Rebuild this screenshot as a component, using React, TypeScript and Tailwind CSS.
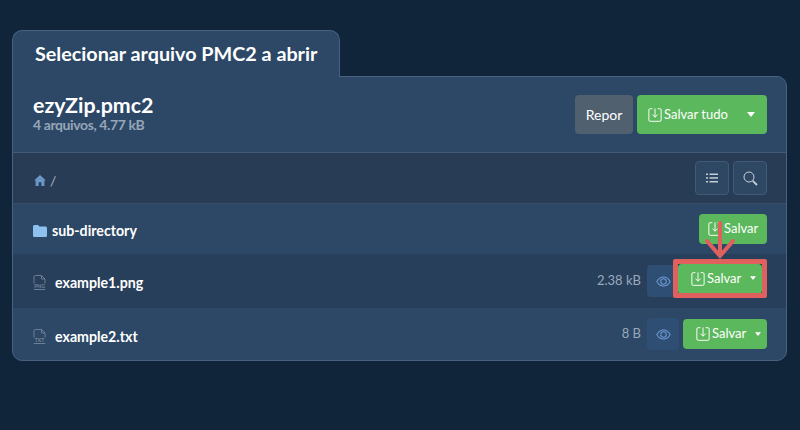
const SaveIcon = () => (
    <svg width="14" height="14" viewBox="0 0 16 16" fill="none" stroke="currentColor" strokeWidth="1.1" className="shrink-0">
        <path d="M5 .8H2.500A1.500 1.500 0 0 0 1 2.300v11.400a1.500 1.500 0 0 0 1.500 1.500h11a1.500 1.500 0 0 0 1.500-1.500V2.300A1.500 1.500 0 0 0 13.500.8H11" />
        <path d="M8 .5v10M5 7.500 8 10.500 11 7.500" />
    </svg>
)

const Caret = ({ big }: { big?: boolean }) => (
    <svg width={big ? 8 : 6} height={big ? 5 : 4} viewBox="0 0 8 5" className="shrink-0">
        <path d="M0 0h8L4 5z" fill="currentColor" />
    </svg>
)

const EyeIcon = () => (
    <svg width="15" height="11" viewBox="0 0 16 12" fill="none" stroke="#6f9bd1" strokeWidth="1.1">
        <path d="M.7 6C2.500 2.800 5 1 8 1s5.500 1.800 7.300 5C13.500 9.200 11 11 8 11S2.500 9.200.7 6z" />
        <circle cx="8" cy="6" r="3" />
    </svg>
)

const FileIcon = ({ ext }: { ext: string }) => (
    <div className="relative mt-[1px] h-[15px] w-[13px] shrink-0">
        <svg width="13" height="15" viewBox="0 0 13 15" fill="none" stroke="#75859b" strokeWidth="0.9">
            <path d="M1 8.500V2A1.500 1.500 0 0 1 2.500.5H8.500L12 4v4.500M8.500.5V4H12M1 14v.5h11V14" />
        </svg>
        <span className="absolute bottom-[1px] left-[-1px] w-[15px] text-center text-[5px] leading-[6px] text-[#75859b]">{ext}</span>
    </div>
)

const SaveSplit = () => (
    <button className="flex h-[30px] w-[84px] items-center rounded-[4px] bg-[#5cb85c] pl-[13px] text-[13px] text-white">
        <SaveIcon />
        <span className="ml-[2px]">Salvar</span>
        <span className="ml-[9px] mb-px"><Caret /></span>
    </button>
)

const EyeButton = () => (
    <button className="flex h-[32px] w-[32px] items-center justify-center rounded-[4px] bg-[#2e4e74]">
        <EyeIcon />
    </button>
)

const App = () => {
    return (
        <div className="h-[430px] w-[800px] overflow-hidden bg-[#10243a] pl-[12px] pr-[13px] pt-[30px] font-['Lato',sans-serif]">
            <div className="relative z-10 mb-[-1px] flex h-[47px] w-[328px] items-center rounded-t-[10px] border border-b-0 border-[#48627f] bg-[#2c4866] pl-[22px] text-[19.75px] font-bold text-white">
                Selecionar arquivo PMC2 a abrir
            </div>

            <div className="relative h-[285px] overflow-hidden rounded-b-[10px] rounded-tr-[10px] border border-[#48627f] bg-[#2c4866]">
                <div className="flex h-[76px] items-center justify-between border-b border-[#405a78] pl-[20px] pr-[19px]">
                    <div className="mb-[3px]">
                        <div className="text-[21.4px] font-bold leading-[24px] text-white">ezyZip.pmc2</div>
                        <div className="text-[14px] font-bold leading-[16px] tracking-[-0.4px] text-[#97a6b9]">4 arquivos, 4.77 kB</div>
                    </div>
                    <div className="flex gap-[4px]">
                        <button className="h-[39px] w-[58px] rounded-[4px] bg-[#50606f] text-[14px] text-white">Repor</button>
                        <button className="flex h-[39px] w-[130px] items-center rounded-[4px] bg-[#5cb85c] pl-[11px] text-[13px] text-white">
                            <SaveIcon />
                            <span className="ml-[2px]">Salvar tudo</span>
                            <span className="ml-[19px] mb-px"><Caret big /></span>
                        </button>
                    </div>
                </div>

                <div className="flex h-[51px] items-center justify-between border-b border-[#344e6b] bg-[#283c56] pl-[21px] pr-[19px]">
                    <div className="mt-[4px] flex items-center gap-[4px] text-[14px] text-[#a3b1c2]">
                        <svg width="12" height="11" viewBox="0 0 13 12">
                            <path d="M6.500 0 13 6h-1.700v6H8V8H5v4H1.700V6H0z" fill="#6a96c8" />
                        </svg>
                        <span>/</span>
                    </div>
                    <div className="flex gap-[4px]">
                        <button className="flex h-[34px] w-[34px] items-center justify-center rounded-[4px] border border-[#415a76] bg-[#2e4762]">
                            <svg width="12" height="10" viewBox="0 0 12 10" fill="#c4ccd6">
                                <rect x="0" y="0.500" width="2" height="1.500" />
                                <rect x="3.500" y="0.500" width="8.500" height="1.500" />
                                <rect x="0" y="4.200" width="2" height="1.500" />
                                <rect x="3.500" y="4.200" width="8.500" height="1.500" />
                                <rect x="0" y="8" width="2" height="1.500" />
                                <rect x="3.500" y="8" width="8.500" height="1.500" />
                            </svg>
                        </button>
                        <button className="flex h-[34px] w-[34px] items-center justify-center rounded-[4px] border border-[#415a76] bg-[#2e4762]">
                            <svg width="15" height="15" viewBox="0 0 15 15" fill="none" stroke="#c9d0d9">
                                <circle cx="6" cy="6" r="5" strokeWidth="1" />
                                <path d="M9.800 9.800 14 14" strokeWidth="1.800" />
                            </svg>
                        </button>
                    </div>
                </div>

                <div className="flex h-[50px] items-center justify-between pl-[20px] pr-[19px]">
                    <div className="mt-[4px] flex items-center gap-[5px] text-[14.2px] font-bold text-white">
                        <svg width="14" height="12" viewBox="0 0 14 12">
                            <path d="M1.500 0H5l1.500 1.500h6A1.500 1.500 0 0 1 14 3v7.500a1.500 1.500 0 0 1-1.500 1.500h-11A1.500 1.500 0 0 1 0 10.500v-9A1.500 1.500 0 0 1 1.500 0z" fill="#8fc1f0" />
                        </svg>
                        <span>sub-directory</span>
                    </div>
                    <button className="flex h-[30px] w-[68px] items-center rounded-[4px] bg-[#5cb85c] pl-[9px] text-[13px] text-white">
                        <SaveIcon />
                        <span className="ml-[2px]">Salvar</span>
                    </button>
                </div>

                <div className="flex h-[54px] items-center justify-between bg-[#283f5b] pl-[20px] pr-[23px]">
                    <div className="mt-[3px] flex items-center gap-[9px] text-[14.2px] font-bold text-white">
                        <FileIcon ext="PNG" />
                        <span>example1.png</span>
                    </div>
                    <div className="flex items-center">
                        <span className="mr-[6px] text-[13px] text-[#9aa9bb]">2.38 kB</span>
                        <EyeButton />
                        <div className="relative z-10 mb-[5px] ml-[-1px] w-[85px]"><SaveSplit /></div>
                    </div>
                </div>

                <div className="flex h-[52px] items-center justify-between pl-[20px] pr-[19px]">
                    <div className="mt-[5px] flex items-center gap-[9px] text-[14.2px] font-bold text-white">
                        <FileIcon ext="TXT" />
                        <span>example2.txt</span>
                    </div>
                    <div className="flex items-center">
                        <span className="mr-[6px] text-[13px] text-[#9aa9bb]">8 B</span>
                        <EyeButton />
                        <div className="ml-[4px]"><SaveSplit /></div>
                    </div>
                </div>

                <div className="absolute left-[660px] top-[182px] z-20 h-[39px] w-[94px] rounded-[2px] border-[5px] border-[#e0605e]" />
                <svg className="absolute left-[690px] top-[144px] z-20" width="34" height="38" viewBox="0 0 34 38" fill="none" stroke="#e0605e" strokeWidth="4" strokeLinecap="round">
                    <path d="M17 2v33M4 20l13 15 13-15" />
                </svg>
            </div>
        </div>
    )
}

export default App
